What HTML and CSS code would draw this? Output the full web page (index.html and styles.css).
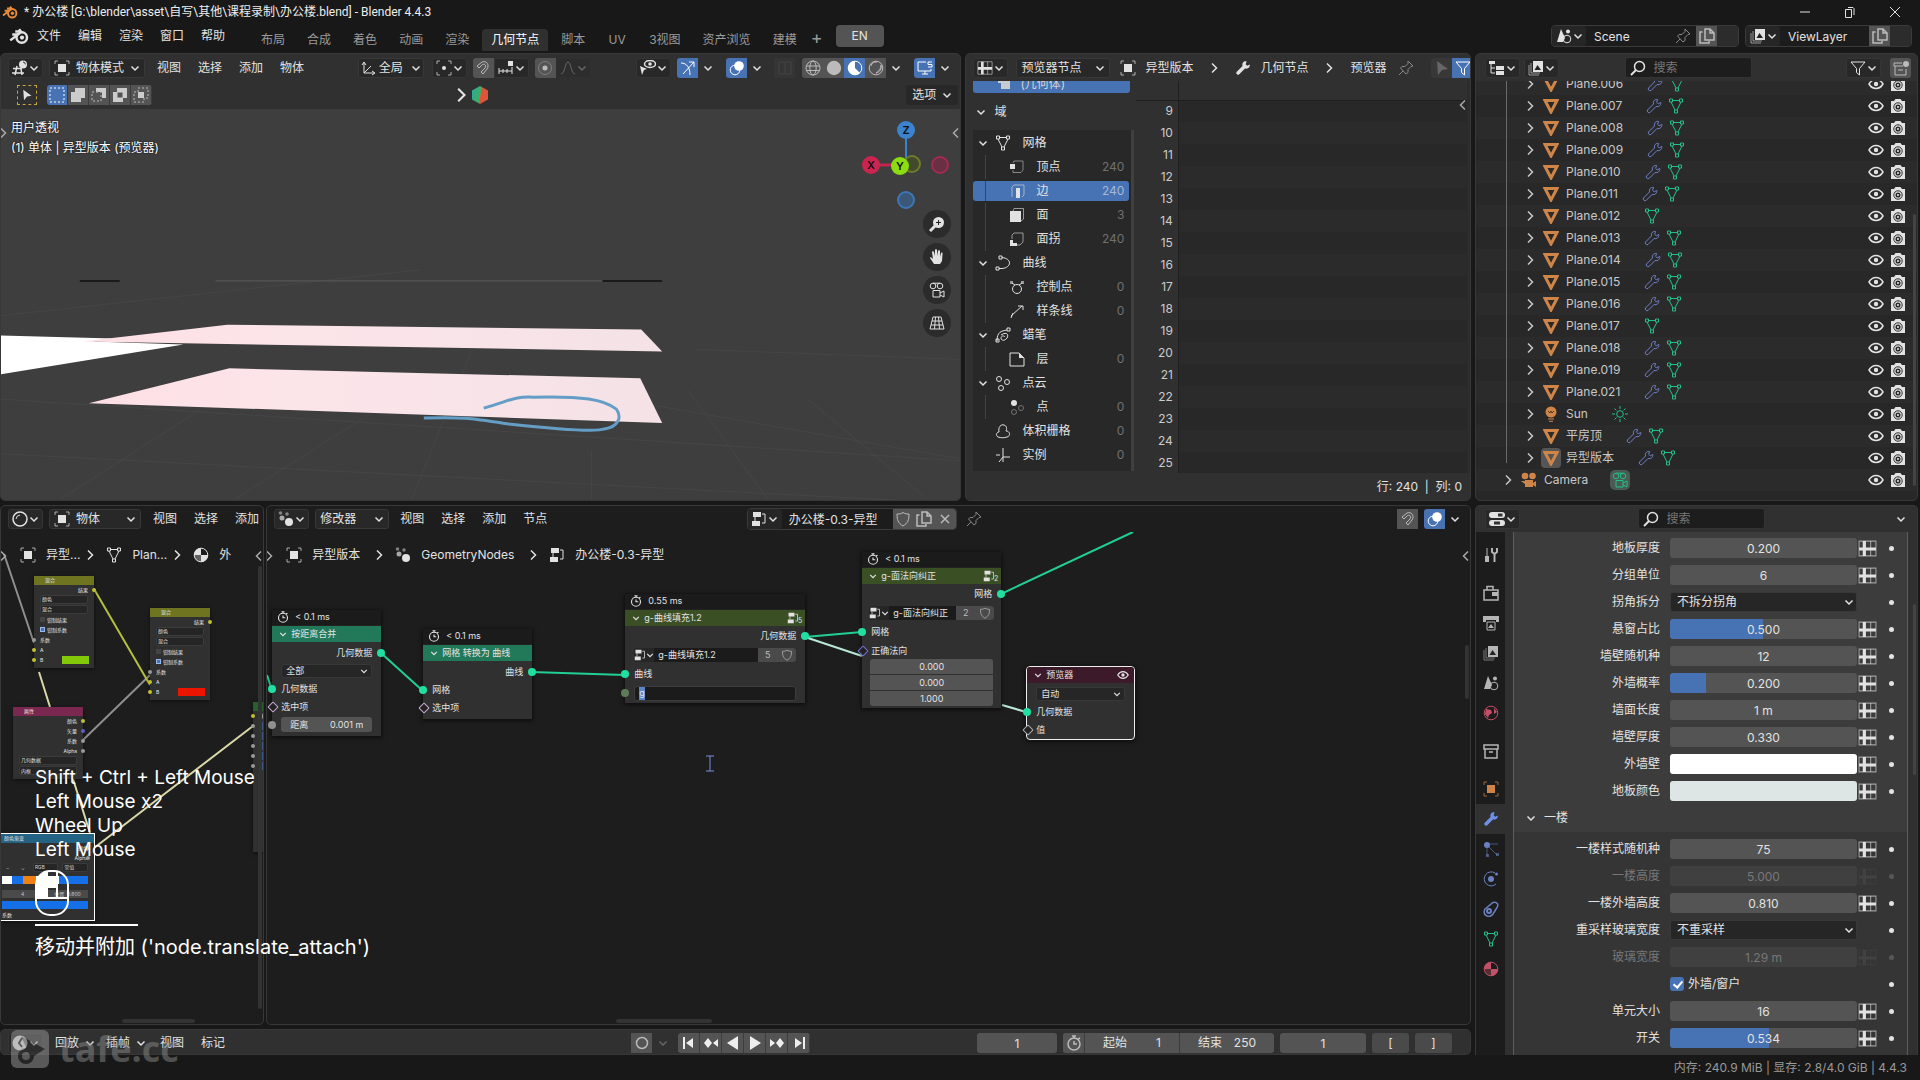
FILE: index.html
```html
<!DOCTYPE html>
<html lang="zh-CN">
<head>
<meta charset="utf-8">
<title>办公楼.blend - Blender 4.4.3</title>
<link rel="stylesheet" href="styles.css">
</head>
<body>
<svg class="defs" aria-hidden="true">
  <symbol id="chev" viewBox="0 0 10 10"><path d="M1.500 3.500L5 7l3.500-3.500" class="ln w15"/></symbol>
  <symbol id="right" viewBox="0 0 10 10"><path d="M3 .5L7.500 5 3 9.500" class="ln w15"/></symbol>
  <symbol id="left" viewBox="0 0 10 10"><path d="M7 .5L2.500 5 7 9.500" class="ln w15"/></symbol>
  <symbol id="blender" viewBox="0 0 16 16"><path d="M1 11.500L7.200 6.800H2.600M5 4.400h4.500L8 2.600" class="ln w2"/><circle cx="10.200" cy="9.200" r="4.200" class="ln w2"/><circle cx="10.400" cy="9.200" r="1.700" fill="currentColor"/></symbol>
  <symbol id="view3d" viewBox="0 0 16 16"><path d="M1 8.500h9M0 13h12M5 6L3 15M9 9l1 6" class="ln w15"/><circle cx="11" cy="4.500" r="4" fill="currentColor"/><path d="M11 2a2.500 2.500 0 0 1 2.400 2.400" stroke="#333" fill="none"/></symbol>
  <symbol id="object" viewBox="0 0 16 16"><rect x="4" y="4" width="8" height="8" fill="currentColor"/><path d="M1 4V1h3M12 1h3v3M15 12v3h-3M4 15H1v-3" class="ln" opacity=".7"/></symbol>
  <symbol id="orient" viewBox="0 0 16 16"><path d="M3 3v10h10M3 13l7-7M1 5l2-3 2 3M11 11l3 2-3 2" class="ln"/></symbol>
  <symbol id="pivot" viewBox="0 0 16 16"><circle cx="8" cy="8" r="2" fill="currentColor"/><path d="M1 4V1h3M12 1h3v3M15 12v3h-3M4 15H1v-3" class="ln" opacity=".7"/></symbol>
  <symbol id="magnet" viewBox="0 0 16 16"><path d="M2 6l5-4c4-2 8 3 5 7l-4 5-2-2 4-4c2-3-1-5-3-3L4 8z" class="ln"/></symbol>
  <symbol id="snap" viewBox="0 0 16 16"><path d="M1 8v6M5 9v4M9 9v4M14 7v7M1 11h13" class="ln"/><rect x="10" y="1" width="5" height="5" fill="currentColor"/></symbol>
  <symbol id="prop" viewBox="0 0 16 16"><circle cx="8" cy="8" r="6.500" class="ln" opacity=".4"/><circle cx="8" cy="8" r="2.500" fill="currentColor"/></symbol>
  <symbol id="falloff" viewBox="0 0 16 16"><path d="M1 14c4 0 4-12 7-12s3 12 7 12" class="ln"/></symbol>
  <symbol id="eyecur" viewBox="0 0 16 16"><ellipse cx="10" cy="4" rx="5.500" ry="3.500" class="ln w15"/><circle cx="10" cy="4" r="1.800" fill="currentColor"/><path d="M0 6l7 3-3 1-2 5z" fill="currentColor"/></symbol>
  <symbol id="gizmo" viewBox="0 0 16 16"><path d="M1 3c6 0 9 5 9 12M3 14L14 2M9 2h5v5" class="ln"/></symbol>
  <symbol id="overlay" viewBox="0 0 16 16"><circle cx="6" cy="10" r="4.800" class="ln"/><circle cx="10" cy="6" r="4.800" fill="currentColor"/></symbol>
  <symbol id="xray" viewBox="0 0 16 16"><path d="M2 2h12v12H2zM8 2v12" class="ln"/></symbol>
  <symbol id="wire" viewBox="0 0 16 16"><circle cx="8" cy="8" r="7" class="ln"/><ellipse cx="8" cy="8" rx="3.200" ry="7" class="ln"/><path d="M1.500 6h13M1.500 10.500h13" class="ln"/></symbol>
  <symbol id="solid" viewBox="0 0 16 16"><circle cx="8" cy="8" r="7.200" fill="currentColor"/></symbol>
  <symbol id="matprev" viewBox="0 0 16 16"><circle cx="8" cy="8" r="6.800" class="ln"/><path d="M8 1v7l5 5a7 7 0 1 1-5-12z" fill="currentColor"/></symbol>
  <symbol id="rendered" viewBox="0 0 16 16"><circle cx="8" cy="8" r="6.800" class="ln"/><path d="M3 6a5.500 5.500 0 0 1 6-4M13 5c1 4-1 7-5 8 3-2 5-4 5-8z" class="ln"/></symbol>
  <symbol id="screen" viewBox="0 0 16 16"><path d="M9 2H1v9h13v-2M5 14h6M8 11v3M15 2h-4v2.500h4V7h-4" class="ln"/></symbol>
  <symbol id="spreads" viewBox="0 0 18 16"><path d="M1 1h16v14H1z" class="ln" opacity=".6"/><path d="M6 1v14M1 8.500h16" class="ln w3"/><path d="M12 1v14" class="ln" opacity=".6"/></symbol>
  <symbol id="wrench" viewBox="0 0 16 16"><path d="M14.800 4.500l-2.600 1.300-1.600-1.500 1-2.800C9 .8 6.800 3 7.500 6L1.500 12c-1 1.400.9 3.500 2.500 2.500L10 8.500c3 .8 5.200-1.400 4.800-4z" fill="currentColor"/></symbol>
  <symbol id="wrencho" viewBox="0 0 16 16"><path d="M14.800 4.500l-2.600 1.300-1.600-1.500 1-2.800C9 .8 6.800 3 7.500 6L1.500 12c-1 1.400.9 3.500 2.500 2.500L10 8.500c3 .8 5.200-1.400 4.800-4z" class="ln"/></symbol>
  <symbol id="pin" viewBox="0 0 16 16"><path d="M10 1l5 5-2 .5-3 3v3L8 14 2.500 8 4 6.500h3l3-3zM5 11l-4 4" class="ln"/></symbol>
  <symbol id="cursor" viewBox="0 0 16 16"><path d="M3 1l11 8-6 1-4 5z" fill="currentColor"/></symbol>
  <symbol id="funnel" viewBox="0 0 16 16"><path d="M1 2h14L9.500 8.500V15L6.500 12.500v-4z" class="ln"/></symbol>
  <symbol id="hier" viewBox="0 0 16 16"><path d="M2 4v9h4M2 8h4" class="ln"/><path d="M0 1h6v3H0zM7 6h8v4H7zM7 11h8v4H7z" fill="currentColor"/></symbol>
  <symbol id="layers" viewBox="0 0 16 16"><path d="M1 5v10h10M3 3v10h9" class="ln" opacity=".6"/><path d="M5 1h10v11H5z" fill="currentColor"/><path d="M6.500 10l3-5 3.500 5z" fill="#222"/></symbol>
  <symbol id="search" viewBox="0 0 16 16"><circle cx="9.500" cy="6.500" r="5" class="ln w15"/><path d="M6 10l-5 5" class="ln w2"/></symbol>
  <symbol id="newcol" viewBox="0 0 16 16"><path d="M9 3H1v3h9M2 6v9h11V9M5 10h5" class="ln"/><circle cx="13" cy="4" r="3" fill="currentColor"/></symbol>
  <symbol id="copy" viewBox="0 0 16 16"><path d="M6 1h5l4 4v7H6zM11 1v4h4M3.500 4H1v11h9v-2" class="ln w15"/></symbol>
  <symbol id="scene" viewBox="0 0 16 16"><path d="M5 1l4 9-2 4H1z" fill="currentColor"/><circle cx="11" cy="11" r="3.800" class="ln"/><circle cx="12" cy="3.500" r="2" fill="currentColor"/></symbol>
  <symbol id="tri" viewBox="0 0 16 16"><path d="M2 2.500h12L8 14z" class="ln w3"/></symbol>
  <symbol id="mesh" viewBox="0 0 16 16"><path d="M4 2.500h8M3 4l4 8M13 4l-4 8" class="ln"/><path d="M1.500 1h3v3h-3zM11.500 1h3v3h-3zM6.500 12h3v3h-3z" class="ln"/></symbol>
  <symbol id="eye" viewBox="0 0 16 16"><path d="M1 8c3.500-6 10.500-6 14 0-3.500 6-10.500 6-14 0z" class="ln w15"/><circle cx="8" cy="8" r="2.200" fill="currentColor"/></symbol>
  <symbol id="cam" viewBox="0 0 16 16"><path d="M1 3h3l1.500-2h5L12 3h3v12H1z" fill="currentColor"/><circle cx="8" cy="9" r="4.200" fill="none" stroke="#2a2a2a"/><circle cx="8" cy="9" r="1.800" fill="none" stroke="#2a2a2a" stroke-width="1.500"/></symbol>
  <symbol id="bulb" viewBox="0 0 16 16"><circle cx="8" cy="6" r="5.500" fill="currentColor"/><path d="M5 5l2 2 1-2 1 2 2-2" stroke="#5a3a20" fill="none"/><path d="M5 13h6M6 15.300h4" class="ln"/></symbol>
  <symbol id="sun" viewBox="0 0 16 16"><circle cx="8" cy="8" r="3.300" class="ln"/><path d="M8 0v3M8 13v3M0 8h3M13 8h3M2.500 2.500l2 2M11.500 11.500l2 2M2.500 13.500l2-2M11.500 4.500l2-2" class="ln"/></symbol>
  <symbol id="movie" viewBox="0 0 16 16"><circle cx="4" cy="4" r="3.300" fill="currentColor"/><circle cx="11.500" cy="4" r="3.300" fill="currentColor"/><path d="M4 8h8v7H4zM12 11l3-2v6l-3-2zM0 9h4v3z" fill="currentColor"/></symbol>
  <symbol id="movieo" viewBox="0 0 16 16"><circle cx="4" cy="4" r="2.800" class="ln"/><circle cx="11" cy="4" r="2.800" class="ln"/><path d="M4 8.500h7V15H4zM11 11l4-2v6l-4-2M4 1.200h7" class="ln"/></symbol>
  <symbol id="vert" viewBox="0 0 16 16"><path d="M5 2h9v9l-2 2.500H4V11M4 4l1-2" class="ln" opacity=".5"/><path d="M1 5h5v5H1z" fill="currentColor"/></symbol>
  <symbol id="edge" viewBox="0 0 16 16"><path d="M3 14V4l2-2h10v10l-2 2" class="ln" opacity=".6"/><path d="M7 5h4v10H7z" fill="currentColor"/></symbol>
  <symbol id="face" viewBox="0 0 16 16"><path d="M4 4l1-2.500h9.500V12L12 14" class="ln" opacity=".6"/><path d="M1 4h11v11H1z" fill="currentColor"/></symbol>
  <symbol id="corner" viewBox="0 0 16 16"><path d="M3 8V4l2-2h9v9l-3 3H8" class="ln" opacity=".6"/><path d="M1 9h3v3h4v3H1z" fill="currentColor"/></symbol>
  <symbol id="curve" viewBox="0 0 16 16"><path d="M7 2.500c10 1 10 10 0 11H4M4 1h3v3H4zM1 12h3v3H1z" class="ln"/></symbol>
  <symbol id="ctrl" viewBox="0 0 16 16"><circle cx="8" cy="10" r="4.500" class="ln"/><path d="M3 4l3 2M13 4l-3 2" class="ln"/><path d="M1 2h3v3H1zM12 2h3v3h-3z" fill="currentColor" opacity=".6"/></symbol>
  <symbol id="spline" viewBox="0 0 16 16"><path d="M2 13L13 3M9 3h5v4M4 10l-2 5" class="ln"/></symbol>
  <symbol id="gp" viewBox="0 0 16 16"><path d="M2 14c0-9 4-10 10-11M6 8c6-4 8 0 6 3s-6 3-6 0c0-2 3-3 4-1M12 1h3v3h-3zM1 12h3v3H1z" class="ln"/></symbol>
  <symbol id="layer" viewBox="0 0 16 16"><path d="M1 2h9l5 5v8H1z" class="ln"/><path d="M10 2v5h5z" fill="currentColor"/></symbol>
  <symbol id="points" viewBox="0 0 16 16"><circle cx="4" cy="4" r="2.500" class="ln"/><circle cx="12" cy="7" r="2.500" class="ln"/><circle cx="6" cy="13" r="2.500" class="ln"/></symbol>
  <symbol id="point" viewBox="0 0 16 16"><circle cx="5" cy="4" r="3" fill="currentColor"/><g opacity=".4"><circle cx="12" cy="9" r="2.500" class="ln"/><circle cx="5" cy="13" r="2.500" class="ln"/></g></symbol>
  <symbol id="volume" viewBox="0 0 16 16"><path d="M3 14c-3-2-1-5 1-5-1-5 2-8 5-7s3 4 2 6c4 0 5 5 1 6-3 1-6 1-9 0z" class="ln"/></symbol>
  <symbol id="axes" viewBox="0 0 16 16"><path d="M8 1v9h7M8 10l-4 5M1 8h4M8 10v5" class="ln"/></symbol>
  <symbol id="geo" viewBox="0 0 16 16"><path d="M2 1h8v5h4v8H5V8H2z" fill="currentColor" opacity=".9"/></symbol>
  <symbol id="nodes" viewBox="0 0 16 16"><circle cx="11" cy="11" r="4" fill="currentColor"/><circle cx="4" cy="7" r="2.500" fill="currentColor" opacity=".7"/><circle cx="2.500" cy="2" r="1.800" fill="currentColor" opacity=".5"/><circle cx="9" cy="3" r="1.800" fill="currentColor" opacity=".5"/></symbol>
  <symbol id="nodetree" viewBox="0 0 16 16"><path d="M2 1h8v5H2zM1 10h8v5H1z" fill="currentColor"/><path d="M11 3h3v9h-3M4 6v4" class="ln"/></symbol>
  <symbol id="sphere" viewBox="0 0 16 16"><circle cx="8" cy="8" r="7" class="ln w15"/><path d="M4 8a4.500 4.500 0 0 1 4-4" class="ln"/></symbol>
  <symbol id="material" viewBox="0 0 16 16"><circle cx="8" cy="8" r="6.800" class="ln"/><path d="M8 8V1a7 7 0 0 0-7 7zM8 8h7a7 7 0 0 1-7 7z" fill="currentColor"/><path d="M8 8H1a7 7 0 0 0 7 7z" fill="currentColor" opacity=".35"/></symbol>
  <symbol id="shield" viewBox="0 0 16 16"><path d="M8 1.500c2 1.500 4 1.500 6 1.500 0 6-1 9-6 12-5-3-6-6-6-12 2 0 4 0 6-1.500z" class="ln"/></symbol>
  <symbol id="cross" viewBox="0 0 16 16"><path d="M4 4l8 8M12 4l-8 8" class="ln w15"/></symbol>
  <symbol id="watch" viewBox="0 0 16 16"><circle cx="8" cy="9" r="6" class="ln w15"/><path d="M8 6v3h3M8 3V1M6 1h4M12 4l2-1" class="ln w15"/></symbol>
  <symbol id="props" viewBox="0 0 16 16"><rect x="0" y="1" width="16" height="6" rx="3" fill="currentColor"/><rect x="0" y="9" width="16" height="6" rx="3" fill="currentColor"/><path d="M9 2.500h4.500v3H9zM5 10.500h6v3H5z" fill="#333"/></symbol>
  <symbol id="tool" viewBox="0 0 16 16"><path d="M4 1v8" class="ln"/><path d="M2 9h4v6H2z" fill="currentColor"/><path d="M9 1v4l2.500 2L14 5V1M11.500 7v8" class="ln w2"/></symbol>
  <symbol id="render" viewBox="0 0 16 16"><path d="M1 5h14v10H1zM4 5V1.500h6V5" class="ln w15"/><path d="M9 7h6v4H9z" fill="currentColor"/></symbol>
  <symbol id="output" viewBox="0 0 16 16"><path d="M0 1h16v6h-3V5H3v2H0z" fill="currentColor"/><path d="M4 7h8v8H4z" class="ln"/><path d="M5 13l3-4 3 4z" fill="currentColor"/></symbol>
  <symbol id="world" viewBox="0 0 16 16"><circle cx="8" cy="8" r="6.800" class="ln"/><path d="M3 4l5 1 1 3-3 2-1 3-3-4zM11 3l3 4-3 2z" fill="currentColor"/></symbol>
  <symbol id="box" viewBox="0 0 16 16"><path d="M1 2h14v4H1zM2 6v9h12V6M6 9h4" class="ln w15"/></symbol>
  <symbol id="parts" viewBox="0 0 16 16"><circle cx="4" cy="4" r="3" fill="currentColor"/><path d="M4 7v8M6 6l8 8M7 3h8" class="ln" opacity=".6"/><path d="M3 13h3v3H3zM13 12h3v3h-3z" fill="currentColor" opacity=".6"/></symbol>
  <symbol id="phys" viewBox="0 0 16 16"><circle cx="8" cy="8" r="3" fill="currentColor"/><path d="M13 13A7 7 0 1 1 12 2" class="ln"/><circle cx="13.500" cy="3" r="1.500" fill="currentColor"/></symbol>
  <symbol id="constr" viewBox="0 0 16 16"><path d="M2 8l8-6.500c4-1 6 2 4 5L10 13c-4 5-11 1-8-5z" class="ln w15"/><circle cx="6" cy="10" r="2" class="ln w2"/></symbol>
  <symbol id="clock" viewBox="0 0 16 16"><circle cx="8" cy="8" r="7.500" fill="currentColor"/><path d="M10 3L7 8l3 4" stroke="#222" stroke-width="2" fill="none"/></symbol>
  <symbol id="zoomin" viewBox="0 0 16 16"><circle cx="9.500" cy="6.500" r="5.500" fill="currentColor"/><path d="M6 10l-5 5" class="ln w3"/><path d="M9.500 4v5M7 6.500h5" stroke="#222"/></symbol>
  <symbol id="hand" viewBox="0 0 16 16"><path d="M5 15l-4-6c0-1 1-1 3 1L3 3c0-1 1.500-1 2 0l1 4V1c0-1 2-1 2 0v6l1-5c0-1 2-1 2 0v6l1-4c1-1 2 0 1.500 1L13 12l-2 3z" fill="currentColor"/></symbol>
  <symbol id="persp" viewBox="0 0 16 16"><path d="M4 2h8l3 12H1zM3 6h10M2 10h12M6.500 2L5.500 14M9.500 2l1 12" class="ln"/></symbol>
</svg>

<div class="app">
  <header class="titlebar">
    <svg class="i orange"><use href="#blender"/></svg>
    <h1>* 办公楼 [G:\blender\asset\自写\其他\课程录制\办公楼.blend] - Blender 4.4.3</h1>
    <span class="grow"></span>
    <button class="win" aria-label="最小化"><svg viewBox="0 0 12 12"><path d="M1 6h10" class="ln"/></svg></button>
    <button class="win" aria-label="还原"><svg viewBox="0 0 12 12"><path d="M1.500 3.500h6v8h-6zM4 1.500h5l1 1V9" class="ln"/></svg></button>
    <button class="win" aria-label="关闭"><svg viewBox="0 0 12 12"><path d="M1 1l10 10M11 1L1 11" class="ln"/></svg></button>
  </header>

  <nav class="menubar">
    <svg class="i big"><use href="#blender"/></svg>
    <div class="menus"><button>文件</button><button>编辑</button><button>渲染</button><button>窗口</button><button>帮助</button></div>
    <div class="tabs"><button>布局</button><button>合成</button><button>着色</button><button>动画</button><button>渲染</button><button class="on">几何节点</button><button>脚本</button><button>UV</button><button>3视图</button><button>资产浏览</button><button>建模</button></div>
    <button class="plus">+</button>
    <button class="lang">EN</button>
    <span class="grow"></span>
    <div class="idbar scene"><button class="ed"><svg class="i"><use href="#scene"/></svg><svg class="c"><use href="#chev"/></svg></button><input aria-label="场景" value="Scene"><svg class="i dim"><use href="#pin"/></svg><button class="sq on"><svg class="i"><use href="#copy"/></svg></button><button class="sq" aria-label="移除场景"></button></div>
    <div class="idbar vlayer"><button class="ed"><svg class="i"><use href="#layers"/></svg><svg class="c"><use href="#chev"/></svg></button><input aria-label="视图层" value="ViewLayer"><button class="sq on"><svg class="i"><use href="#copy"/></svg></button><button class="sq" aria-label="移除视图层"></button></div>
  </nav>

  <main class="work">
    <div class="leftcol">
      <div class="toprow">
        <section class="area view3d">
          <div class="head">
            <button class="ed"><svg class="i"><use href="#view3d"/></svg><svg class="c"><use href="#chev"/></svg></button>
            <div class="sel mode"><svg class="i"><use href="#object"/></svg><select aria-label="模式"><option>物体模式</option></select><svg class="c"><use href="#chev"/></svg></div>
            <div class="menus"><button>视图</button><button>选择</button><button>添加</button><button>物体</button></div>
            <span class="grow"></span>
            <div class="sel orient"><svg class="i"><use href="#orient"/></svg><select aria-label="坐标系"><option>全局</option></select><svg class="c"><use href="#chev"/></svg></div>
            <button class="ed"><svg class="i"><use href="#pivot"/></svg><svg class="c"><use href="#chev"/></svg></button>
            <div class="grp"><button class="sq on"><svg class="i"><use href="#magnet"/></svg></button><button class="ed"><svg class="i"><use href="#snap"/></svg><svg class="c"><use href="#chev"/></svg></button></div>
            <div class="grp"><button class="sq on"><svg class="i"><use href="#prop"/></svg></button><button class="ed faint"><svg class="i"><use href="#falloff"/></svg><svg class="c"><use href="#chev"/></svg></button></div>
            <span class="grow"></span>
            <button class="ed"><svg class="i"><use href="#eyecur"/></svg><svg class="c"><use href="#chev"/></svg></button>
            <div class="grp"><button class="sq blue"><svg class="i"><use href="#gizmo"/></svg></button><button class="cb"><svg class="c"><use href="#chev"/></svg></button></div>
            <div class="grp ov"><button class="sq blue"><svg class="i"><use href="#overlay"/></svg></button><button class="cb"><svg class="c"><use href="#chev"/></svg></button></div>
            <button class="sq ghost"><svg class="i"><use href="#xray"/></svg></button>
            <div class="grp shade"><button class="sq on"><svg class="i"><use href="#wire"/></svg></button><button class="sq on"><svg class="i"><use href="#solid"/></svg></button><button class="sq blue"><svg class="i"><use href="#matprev"/></svg></button><button class="sq on"><svg class="i"><use href="#rendered"/></svg></button><button class="cb"><svg class="c"><use href="#chev"/></svg></button></div>
            <div class="grp"><button class="sq blue"><svg class="i"><use href="#screen"/></svg></button><button class="cb"><svg class="c"><use href="#chev"/></svg></button></div>
          </div>
          <div class="head tools">
            <button class="tsel"><svg class="i sm"><use href="#cursor"/></svg></button>
            <div class="grp modes">
              <button class="sq blue"><svg class="i" viewBox="0 0 16 16"><path d="M1 1h14v14H1z" class="ln dash"/></svg></button>
              <button class="sq on"><svg class="i" viewBox="0 0 16 16"><path d="M5 1h10v10h-4v4H1V5h4z" fill="#ccc"/></svg></button>
              <button class="sq on"><svg class="i" viewBox="0 0 16 16"><path d="M5 1h10v10h-4V5H5z" fill="#ccc"/><path d="M1 5h9v9H1z" class="ln dash"/></svg></button>
              <button class="sq on"><svg class="i" viewBox="0 0 16 16"><path fill-rule="evenodd" d="M5 1h10v10h-4v4H1V5h4zM5.500 5.500v5h5v-5z" fill="#ccc"/></svg></button>
              <button class="sq on"><svg class="i" viewBox="0 0 16 16"><path d="M5 1h10v10h-4v4H1V5h4z" class="ln dash"/><path d="M5 5h6v6H5z" fill="#ccc"/></svg></button>
            </div>
            <div class="asset"><svg class="c"><use href="#right"/></svg><span class="hex"></span></div>
            <span class="grow"></span>
            <button class="opt">选项<svg class="c"><use href="#chev"/></svg></button>
          </div>
          <div class="scene3d">
            <svg class="fill" viewBox="1 108 962 393" preserveAspectRatio="none">
              <g stroke="#4a4a4a" fill="none">
                <path d="M1 316l420-46M1 455l962 50M1 400l962 62M60 501l140-90M235 501l150-95M413 501l60-150M593 501v-50M770 501l-80-110M930 501L810 400M620 400l343 60M700 350l263 10" opacity=".6"/>
              </g>
              <path d="M80 281h40M604 281h60" stroke="#1a1a1a" stroke-width="2"/><path d="M216 281h388" stroke="#5c5c5c"/>
              <path d="M1 336l112 3-20 3 91 3L1 375z" fill="#fff"/>
              <path d="M82 342l146-17 415 5 21 22z" fill="url(#pink)"/>
              <path d="M89 404l141-35 412 10 22 45z" fill="url(#pink)"/>
              <path d="M485 409c28-8 30-12 50-11 50-1 70 2 83 12 6 8 2 18-12 20-8 3-50 0-96-5-40-6-45-7-85-6" fill="none" stroke="#649ec6" stroke-width="3"/>
              <defs><linearGradient id="pink"><stop offset="0" stop-color="#fddfe4"/><stop offset=".35" stop-color="#fce5e9"/><stop offset="1" stop-color="#f4e2e7"/></linearGradient></defs>
            </svg>
            <div class="info"><p>用户透视</p><p>(1) 单体 | 异型版本 (预览器)</p></div>
            <svg class="axis" viewBox="860 117 96 96">
              <path d="M908 129v36" stroke-width="2" stroke="#3b83cf"/><path d="M880 164h20" stroke-width="3" stroke="#c2254e"/>
              <circle cx="914" cy="163" r="8" fill="#444a2c" stroke="#6b7d2a" stroke-width="2"/>
              <circle cx="942" cy="164" r="8" fill="#693044" stroke="#a52a50" stroke-width="2"/>
              <circle cx="908" cy="199" r="8" fill="#3c5878" stroke="#3b77b8" stroke-width="2"/>
              <circle cx="908" cy="129" r="9" fill="#3b83cf"/><circle cx="873" cy="164" r="9" fill="#cb2450"/><circle cx="902" cy="165" r="9" fill="#8bdc10"/>
              <text x="908" y="133">Z</text><text x="873" y="168">X</text><text x="902" y="169">Y</text>
            </svg>
            <div class="navs"><button aria-label="缩放"><svg class="i"><use href="#zoomin"/></svg></button><button aria-label="平移"><svg class="i"><use href="#hand"/></svg></button><button aria-label="相机"><svg class="i"><use href="#movieo"/></svg></button><button aria-label="透视"><svg class="i"><use href="#persp"/></svg></button></div>
            <svg class="c edgeR"><use href="#left"/></svg><svg class="c edgeL"><use href="#right"/></svg>
          </div>
        </section>

        <section class="area sheet">
          <div class="head">
            <button class="ed"><svg class="i"><use href="#spreads"/></svg><svg class="c"><use href="#chev"/></svg></button>
            <div class="sel"><select aria-label="数据源"><option>预览器节点</option></select><svg class="c"><use href="#chev"/></svg></div>
            <div class="crumb"><svg class="i"><use href="#object"/></svg><span>异型版本</span><svg class="c"><use href="#right"/></svg><svg class="i"><use href="#wrench"/></svg><span>几何节点</span><svg class="c"><use href="#right"/></svg><span>预览器</span></div>
            <svg class="i dim"><use href="#pin"/></svg>
            <div class="grp"><button class="sq ghost2"><svg class="i"><use href="#cursor"/></svg></button><button class="sq blue"><svg class="i"><use href="#funnel"/></svg></button></div>
          </div>
          <div class="sheetbody">
            <aside class="dtree">
              <div class="geosel"><svg class="i"><use href="#geo"/></svg><span>(几何体)</span></div>
              <h2><svg class="c"><use href="#chev"/></svg>域</h2>
              <ul>
                <li class="p"><svg class="c"><use href="#chev"/></svg><svg class="i"><use href="#mesh"/></svg><span>网格</span></li>
                <li><svg class="i"><use href="#vert"/></svg><span>顶点</span><b>240</b></li>
                <li class="on"><svg class="i"><use href="#edge"/></svg><span>边</span><b>240</b></li>
                <li><svg class="i"><use href="#face"/></svg><span>面</span><b>3</b></li>
                <li><svg class="i"><use href="#corner"/></svg><span>面拐</span><b>240</b></li>
                <li class="p"><svg class="c"><use href="#chev"/></svg><svg class="i"><use href="#curve"/></svg><span>曲线</span></li>
                <li><svg class="i"><use href="#ctrl"/></svg><span>控制点</span><b>0</b></li>
                <li><svg class="i"><use href="#spline"/></svg><span>样条线</span><b>0</b></li>
                <li class="p"><svg class="c"><use href="#chev"/></svg><svg class="i"><use href="#gp"/></svg><span>蜡笔</span></li>
                <li><svg class="i"><use href="#layer"/></svg><span>层</span><b>0</b></li>
                <li class="p"><svg class="c"><use href="#chev"/></svg><svg class="i"><use href="#points"/></svg><span>点云</span></li>
                <li><svg class="i"><use href="#point"/></svg><span>点</span><b>0</b></li>
                <li class="p leaf"><svg class="i"><use href="#volume"/></svg><span>体积栅格</span><b>0</b></li>
                <li class="p leaf"><svg class="i"><use href="#axes"/></svg><span>实例</span><b>0</b></li>
              </ul>
            </aside>
            <div class="grid">
              <table>
                <thead><tr><th aria-label="索引"></th><td></td></tr></thead>
                <tbody>
                  <tr><th>9</th><td></td></tr><tr><th>10</th><td></td></tr><tr><th>11</th><td></td></tr><tr><th>12</th><td></td></tr><tr><th>13</th><td></td></tr><tr><th>14</th><td></td></tr><tr><th>15</th><td></td></tr><tr><th>16</th><td></td></tr><tr><th>17</th><td></td></tr><tr><th>18</th><td></td></tr><tr><th>19</th><td></td></tr><tr><th>20</th><td></td></tr><tr><th>21</th><td></td></tr><tr><th>22</th><td></td></tr><tr><th>23</th><td></td></tr><tr><th>24</th><td></td></tr><tr><th>25</th><td></td></tr>
                </tbody>
              </table>
              <svg class="c edgeR"><use href="#left"/></svg>
            </div>
          </div>
          <footer class="stat">行: 240 &nbsp;|&nbsp; 列: 0</footer>
        </section>
      </div>

      <div class="midrow">
        <section class="area shader">
          <div class="head">
            <button class="ed"><svg class="i"><use href="#sphere"/></svg><svg class="c"><use href="#chev"/></svg></button>
            <div class="sel obj"><svg class="i"><use href="#object"/></svg><select aria-label="着色类型"><option>物体</option></select><svg class="c"><use href="#chev"/></svg></div>
            <div class="menus"><button>视图</button><button>选择</button><button>添加</button></div>
          </div>
          <div class="canvas">
            <svg class="wires" viewBox="0 0 263 490">
              <path d="M3 22l30 89M82 208l67-65" stroke="#8f8f8f"/><path d="M93 57l56 96" stroke="#b5c03c"/><path d="M38 140l11 35M72 247l17 54M93 316l159-122" stroke="#d8d8a8"/>
            </svg>
            <div class="crumb"><svg class="i"><use href="#object"/></svg><span>异型...</span><svg class="c"><use href="#right"/></svg><svg class="i"><use href="#mesh"/></svg><span>Plan...</span><svg class="c"><use href="#right"/></svg><svg class="i"><use href="#material"/></svg><span>外</span></div>
            <svg class="c edgeR"><use href="#left"/></svg><svg class="c edgeL"><use href="#right"/></svg>
            <div class="mini mix" style="left:33px;top:44px"><h3>混合</h3><p class="out y">结果</p><p><select aria-label="数据类型"><option>颜色</option></select></p><p><select aria-label="混合模式"><option>混合</option></select></p><p><label><input type="checkbox">钳制结果</label></p><p><label><input type="checkbox" checked>钳制系数</label></p><p class="in g">系数</p><p class="in y">A</p><p class="in y">B<i class="green"></i></p></div>
            <div class="mini mix" style="left:149px;top:76px"><h3>混合</h3><p class="out y">结果</p><p><select aria-label="数据类型"><option>颜色</option></select></p><p><select aria-label="混合模式"><option>混合</option></select></p><p><label><input type="checkbox">钳制结果</label></p><p><label><input type="checkbox" checked>钳制系数</label></p><p class="in g">系数</p><p class="in y">A</p><p class="in y">B<i class="red"></i></p></div>
            <div class="mini attr" style="left:12px;top:175px"><h3>属性</h3><p class="out y">颜色</p><p class="out v">矢量</p><p class="out g">系数</p><p class="out g">Alpha</p><p><select aria-label="属性类型"><option>几何数据</option></select></p><p><input aria-label="名称" value="内框"></p></div>
            <div class="mini bsdf" style="left:252px;top:170px"><h3></h3><p class="in y">基</p><p class="in g"><i></i></p><p class="in g"><i></i></p><p class="in g"><i></i></p><p class="in g"><i></i></p><p class="in g"><i></i></p></div>
            <div class="mini ramp" style="left:-6px;top:301px"><h3>颜色渐变</h3><p class="out y">颜色</p><p class="out g">Alpha</p><div class="two"><span>−</span><span>⌄</span><select aria-label="颜色模式"><option>RGB</option></select><select aria-label="插值"><option>常值</option></select></div><div class="bar"></div><div class="two"><input aria-label="索引" value="4"><input aria-label="位置" value="位置  0.600"></div><div class="bar plain"></div><p>系数</p></div>
          </div>
        </section>

        <section class="area geon">
          <div class="head">
            <button class="ed"><svg class="i"><use href="#nodes"/></svg><svg class="c"><use href="#chev"/></svg></button>
            <div class="sel modi"><select aria-label="节点树类型"><option>修改器</option></select><svg class="c"><use href="#chev"/></svg></div>
            <div class="menus"><button>视图</button><button>选择</button><button>添加</button><button>节点</button></div>
            <span class="grow g4"></span>
            <div class="idbar ngroup"><button class="ed"><svg class="i"><use href="#nodetree"/></svg><svg class="c"><use href="#chev"/></svg></button><input aria-label="节点组名称" value="办公楼-0.3-异型"><button class="sq on"><svg class="i"><use href="#shield"/></svg></button><button class="sq on"><svg class="i"><use href="#copy"/></svg></button><button class="sq on"><svg class="i"><use href="#cross"/></svg></button></div>
            <svg class="i dim tpin"><use href="#pin"/></svg>
            <span class="grow g9"></span>
            <button class="sq on"><svg class="i"><use href="#magnet"/></svg></button>
            <div class="grp"><button class="sq blue"><svg class="i"><use href="#overlay"/></svg></button><button class="cb"><svg class="c"><use href="#chev"/></svg></button></div>
          </div>
          <div class="canvas">
            <svg class="wires" viewBox="0 0 1205 490">
              <g stroke="#21cf96"><path d="M0 143l5 15M114 121l42 38M264 140l94 3M538 105l57-5M734 62L866 0"/></g>
              <path d="M538 105l57 19M735 173l24 7" stroke="#b9e8d6"/>
              <path d="M439 224h8M439 239h8M443 224v15" stroke="#7b8fe0" stroke-width="1"/>
            </svg>
            <div class="crumb"><svg class="i"><use href="#object"/></svg><span>异型版本</span><svg class="c"><use href="#right"/></svg><svg class="i"><use href="#nodes"/></svg><span>GeometryNodes</span><svg class="c"><use href="#right"/></svg><svg class="i"><use href="#nodetree"/></svg><span>办公楼-0.3-异型</span></div>
            <svg class="c edgeR"><use href="#left"/></svg><svg class="c edgeL"><use href="#right"/></svg>

            <article class="node" style="left:5px;top:78px"><div class="time"><svg class="i"><use href="#watch"/></svg>&lt; 0.1 ms</div><h3><svg class="c"><use href="#chev"/></svg>按距离合并</h3>
              <div class="row out geo">几何数据</div><div class="row"><div class="drop"><select aria-label="合并模式"><option>全部</option></select><svg class="c"><use href="#chev"/></svg></div></div><div class="row in geo">几何数据</div><div class="row in bool">选中项</div><div class="row in flt"><label class="num"><span>距离</span><input value="0.001 m"></label></div></article>
            <article class="node" style="left:156px;top:97px"><div class="time"><svg class="i"><use href="#watch"/></svg>&lt; 0.1 ms</div><h3><svg class="c"><use href="#chev"/></svg>网格 转换为 曲线</h3>
              <div class="row out geo">曲线</div><div class="row in geo">网格</div><div class="row in bool">选中项</div></article>
            <article class="node tall n3" style="left:358px;top:62px"><div class="time"><svg class="i"><use href="#watch"/></svg>0.55 ms</div><h3><svg class="c"><use href="#chev"/></svg>g-曲线填充1.2<svg class="i grpi"><use href="#nodetree"/></svg><sub>5</sub></h3>
              <div class="row out geo">几何数据</div><div class="row"><div class="gsel"><svg class="i"><use href="#nodetree"/></svg><svg class="c"><use href="#chev"/></svg><input aria-label="节点组" value="g-曲线填充1.2"><button>5</button><button><svg class="i"><use href="#shield"/></svg></button></div></div><div class="row in geo">曲线</div><div class="row in str"><div class="edit"><input aria-label="组值" value="g"></div></div></article>
            <article class="node tall n4" style="left:595px;top:20px"><div class="time"><svg class="i"><use href="#watch"/></svg>&lt; 0.1 ms</div><h3><svg class="c"><use href="#chev"/></svg>g-面法向纠正<svg class="i grpi"><use href="#nodetree"/></svg><sub>2</sub></h3>
              <div class="row out geo">网格</div><div class="row"><div class="gsel"><svg class="i"><use href="#nodetree"/></svg><svg class="c"><use href="#chev"/></svg><input aria-label="节点组" value="g-面法向纠正"><button>2</button><button><svg class="i"><use href="#shield"/></svg></button></div></div><div class="row in geo">网格</div><div class="row in vec">正确法向</div><div class="xyz"><input aria-label="X" value="0.000"><input aria-label="Y" value="0.000"><input aria-label="Z" value="1.000"></div></article>
            <article class="node n5" style="left:759px;top:134px"><h3><svg class="c"><use href="#chev"/></svg>预览器<svg class="i grpi"><use href="#eye"/></svg></h3>
              <div class="row"><div class="drop"><select aria-label="域"><option>自动</option></select><svg class="c"><use href="#chev"/></svg></div></div><div class="row in geo">几何数据</div><div class="row in val">值</div></article>
          </div>
        </section>
      </div>

      <section class="area timeline">
        <div class="head">
          <button class="ed"><svg class="i"><use href="#clock"/></svg><svg class="c"><use href="#chev"/></svg></button>
          <div class="menus tm"><button>回放<svg class="c"><use href="#chev"/></svg></button><button>插帧<svg class="c"><use href="#chev"/></svg></button><button>视图</button><button>标记</button></div>
          <span class="grow g5"></span>
          <button class="sq on" aria-label="自动插帧"><svg class="i" viewBox="0 0 16 16"><circle cx="8" cy="8" r="5.500" class="ln w15"/></svg></button><svg class="c faint"><use href="#chev"/></svg>
          <div class="grp play">
            <button class="sq on" aria-label="首帧"><svg class="i" viewBox="0 0 16 16"><path d="M2 2h2v12H2zM12 3v10L5 8z" fill="#eee"/></svg></button>
            <button class="sq on" aria-label="上一关键帧"><svg class="i" viewBox="0 0 16 16"><path d="M5 3l4 5-4 5-4-5zM15 4v8l-5-4z" fill="#eee"/></svg></button>
            <button class="sq on" aria-label="倒放"><svg class="i" viewBox="0 0 16 16"><path d="M13 1v14L2 8z" fill="#eee"/></svg></button>
            <button class="sq on" aria-label="播放"><svg class="i" viewBox="0 0 16 16"><path d="M3 1v14l11-7z" fill="#eee"/></svg></button>
            <button class="sq on" aria-label="下一关键帧"><svg class="i" viewBox="0 0 16 16"><path d="M11 3l4 5-4 5-4-5zM1 4v8l5-4z" fill="#eee"/></svg></button>
            <button class="sq on" aria-label="末帧"><svg class="i" viewBox="0 0 16 16"><path d="M12 2h2v12h-2zM4 3v10l7-5z" fill="#eee"/></svg></button>
          </div>
          <span class="grow g2"></span>
          <input class="tf w80" aria-label="当前帧" value="1">
          <div class="grp range"><button class="sq on" aria-label="预览范围"><svg class="i"><use href="#watch"/></svg></button><label>起始<input value="1"></label><label>结束<input value="250"></label></div>
          <input class="tf w86" aria-label="帧步长" value="1"><button class="brk">[</button><button class="brk">]</button>
        </div>
      </section>
    </div>

    <div class="rightcol">
      <section class="area outliner">
        <div class="head">
          <button class="ed"><svg class="i"><use href="#hier"/></svg><svg class="c"><use href="#chev"/></svg></button>
          <button class="ed"><svg class="i"><use href="#layers"/></svg><svg class="c"><use href="#chev"/></svg></button>
          <span class="grow g2"></span>
          <label class="find"><svg class="i"><use href="#search"/></svg><input type="search" aria-label="搜索大纲" placeholder="搜索"></label>
          <span class="grow g3"></span>
          <button class="ed"><svg class="i"><use href="#funnel"/></svg><svg class="c"><use href="#chev"/></svg></button>
          <button class="sq on newc" aria-label="新建集合"><svg class="i"><use href="#newcol"/></svg></button>
        </div>
        <ul class="olist"></ul>
      </section>

      <section class="area propsed">
        <div class="head">
          <button class="ed"><svg class="i"><use href="#props"/></svg><svg class="c"><use href="#chev"/></svg></button>
          <span class="grow"></span>
          <label class="find"><svg class="i"><use href="#search"/></svg><input type="search" aria-label="搜索属性" placeholder="搜索"></label>
          <span class="grow"></span>
          <button class="cb" aria-label="选项"><svg class="c"><use href="#chev"/></svg></button>
        </div>
        <div class="pbody">
          <nav class="ptabs">
            <button class="gap"><svg class="i"><use href="#tool"/></svg></button><button><svg class="i"><use href="#render"/></svg></button><button><svg class="i"><use href="#output"/></svg></button><button><svg class="i"><use href="#layers"/></svg></button><button><svg class="i"><use href="#scene"/></svg></button><button class="gap pinkc"><svg class="i"><use href="#world"/></svg></button><button class="gap"><svg class="i"><use href="#box"/></svg></button><button class="orangec"><svg class="i"><use href="#object"/></svg></button><button class="on bluec"><svg class="i"><use href="#wrench"/></svg></button><button class="bluec2"><svg class="i"><use href="#parts"/></svg></button><button class="bluec2"><svg class="i"><use href="#phys"/></svg></button><button class="bluec2"><svg class="i"><use href="#constr"/></svg></button><button class="greenc"><svg class="i"><use href="#mesh"/></svg></button><button class="pinkc"><svg class="i"><use href="#material"/></svg></button>
          </nav>
          <div class="panel">
            <div class="rows a"></div>
            <h2><svg class="c"><use href="#chev"/></svg>一楼</h2>
            <div class="rows b"></div>
          </div>
        </div>
      </section>
    </div>
  </main>

  <footer class="status">内存: 240.9 MiB | 显存: 2.8/4.0 GiB | 4.4.3</footer>

  <div class="keys">
    <p>Shift + Ctrl + Left Mouse</p><p>Left Mouse x2</p><p>Wheel Up</p><p>Left Mouse</p>
    <svg viewBox="0 0 34 46"><path d="M12 1h3a14 14 0 0 0-14 14v13h11z" fill="#fff"/><rect x="1" y="1" width="32" height="44" rx="14" fill="none" stroke="#fff" stroke-width="2"/><path d="M12 1v27M22 1v27M1 28h32M12 8h10M12 17h10" stroke="#fff" stroke-width="2"/><path d="M12 9h10v8H12z" fill="#fff"/></svg>
    <hr>
    <p class="op">移动并附加 ('node.translate_attach')</p>
  </div>
  <div class="mark"><svg viewBox="0 0 38 38"><rect width="38" height="38" rx="6" fill="#999"/><path d="M10 6l24 13-14 9z" fill="#333"/><circle cx="15" cy="26" r="6" fill="none" stroke="#333" stroke-width="4"/></svg><span>tafe.cc</span></div>
</div>
<script src="app.js"></script>
</body>
</html>
```
FILE: app.js
```js
const icon = (name, cls = "i") => `<svg class="${cls}"><use href="#${name}"/></svg>`;

const mesh = (name, mod = true, active = false) => ({ name, active, icon: "tri", data: mod ? ["wrencho", "mesh"] : ["mesh"] });
const objects = [
  mesh("Plane.006"), mesh("Plane.007"), mesh("Plane.008"), mesh("Plane.009"), mesh("Plane.010"),
  mesh("Plane.011"), mesh("Plane.012", false), mesh("Plane.013"), mesh("Plane.014"), mesh("Plane.015"),
  mesh("Plane.016"), mesh("Plane.017", false), mesh("Plane.018"), mesh("Plane.019"), mesh("Plane.021"),
  { name: "Sun", icon: "bulb", data: ["sun"] },
  mesh("平房顶"), mesh("异型版本", true, true),
  { name: "Camera", icon: "movie", data: ["movieo"], top: true }
];
document.querySelector(".olist").innerHTML = objects.map(o => `
  <li class="${o.top ? "top" : ""}">${icon("right", "c")}<span class="ob${o.active ? " act" : ""}">${icon(o.icon)}</span>
  <span class="nm">${o.name}</span>${o.data.map(d => icon(d, "i d-" + d)).join("")}
  <span class="grow"></span>${icon("eye")}${icon("cam")}</li>`).join("");

const upper = [
  ["地板厚度", "0.200"], ["分组单位", "6"], ["拐角拆分", "不拆分拐角", { menu: true }],
  ["悬窗占比", "0.500", { fill: 50 }], ["墙壁随机种", "12"], ["外墙概率", "0.200", { fill: 19 }],
  ["墙面长度", "1 m"], ["墙壁厚度", "0.330"], ["外墙壁", "#ffffff", { color: true }], ["地板颜色", "#dde6e4", { color: true }]
];
const ground = [
  ["一楼样式随机种", "75"], ["一楼高度", "5.000", { off: true }], ["一楼外墙高度", "0.810"],
  ["重采样玻璃宽度", "不重采样", { menu: true }], ["玻璃宽度", "1.29 m", { off: true }],
  ["外墙/窗户", "", { check: true }], ["单元大小", "16"], ["开关", "0.534", { fill: 53 }]
];
function row([label, value, opt = {}], key) {
  if (opt.check) return `<div class="prow"><span></span><label class="chk"><input type="checkbox" checked>${label}</label><i class="dot"></i></div>`;
  let field = `<input id="${key}" value="${value}"${opt.fill ? ` class="sl" style="--fill:${opt.fill}%"` : ""}${opt.off ? " disabled" : ""}>`;
  if (opt.menu) field = `<div class="drop"><select id="${key}"><option>${value}</option></select>${icon("chev", "c")}</div>`;
  if (opt.color) field = `<button id="${key}" class="swatch" style="background:${value}"></button>`;
  return `<div class="prow${opt.off ? " off" : ""}"><label for="${key}">${label}</label>${field}${opt.menu ? "<span></span>" : icon("spreads")}<i class="dot"></i></div>`;
}
document.querySelector(".rows.a").innerHTML = upper.map((r, n) => row(r, "a" + n)).join("");
document.querySelector(".rows.b").innerHTML = ground.map((r, n) => row(r, "b" + n)).join("");
```
FILE: styles.css
```css
* { box-sizing: border-box; margin: 0; padding: 0; }
body { background: #181818; color: #e2e2e2; font: 12px/16px Inter, "Noto Sans CJK SC", sans-serif; overflow: hidden; }
button, input, select { font: inherit; color: inherit; background: none; border: 0; outline: 0; min-width: 0; }
button { display: inline-flex; align-items: center; justify-content: center; white-space: nowrap; }
select { appearance: none; flex: 1; }
input[type="search"] { appearance: none; }
ul { list-style: none; }
h1, h2, h3 { font-size: inherit; font-weight: 400; }
.defs { position: absolute; width: 0; height: 0; }
.ln { fill: none; stroke: currentColor; stroke-width: 1; }
.w15 { stroke-width: 1.5; }
.w2 { stroke-width: 2; }
.w3 { stroke-width: 3; }
.dash { stroke-dasharray: 2 2; }
.i { width: 16px; height: 16px; flex: none; }
.i.sm { width: 12px; height: 12px; }
.i.big { width: 20px; height: 20px; }
.c { width: 10px; height: 10px; flex: none; }
.grow { flex: 1; }
.g2 { flex: 2; }
.g3 { flex: 3; }
.g4 { flex: 4; }
.g5 { flex: 5; }
.g9 { flex: 9; }
.dim { color: #888; }
.faint { opacity: .3; }

.app { position: relative; display: flex; flex-direction: column; height: 100vh; }
.titlebar { display: flex; align-items: center; height: 24px; flex: none; padding: 0 6px 0 2px; gap: 6px; }
.titlebar h1 { font: 12px/16px Roboto, "Noto Sans CJK SC", sans-serif; color: #eee; }
.titlebar .orange { color: #e58a3a; }
.win { width: 39px; height: 20px; }
.win svg { width: 12px; height: 12px; }
.menubar { display: flex; align-items: center; height: 29px; flex: none; padding: 0 8px 5px 9px; }
.menus { display: flex; gap: 1px; }
.menus button { padding: 0 8px; height: 20px; }
.tabs { display: flex; gap: 4px; margin-left: 19px; align-self: flex-end; margin-bottom: -3px; color: #9a9a9a; }
.tabs button { padding: 0 9px; height: 22px; min-width: 38px; border-radius: 4px 4px 0 0; }
.tabs .on { background: #303030; color: #fff; }
.plus { width: 22px; height: 22px; font-size: 18px; color: #999; padding-top: 4px; }
.lang { background: #545454; border-radius: 4px; width: 48px; height: 22px; margin-left: 8px; }
.idbar { display: flex; align-items: center; height: 22px; background: #1c1c1c; border: 1px solid #3a3a3a; border-radius: 4px; overflow: hidden; }
.idbar .ed { width: 34px; background: #262626; height: 20px; border: 0; }
.idbar input { flex: 1; padding-left: 8px; height: 20px; }
.idbar.scene { width: 188px; margin-right: 6px; }
.idbar.vlayer { width: 167px; }
.idbar.ngroup { width: 210px; }
.ngroup input { padding-left: 7px; }
.idbar > .dim { margin-right: 5px; }
.sq { width: 21px; height: 20px; flex: none; background: #2c2c2c; }
.sq.on { background: #545454; color: #bbb; }
.sq.blue { background: #4772b3; color: #fff; }
.sq.ghost { color: #444; background: #353535; margin-right: 1px; }
.sq.ghost2 { background: #383838; color: #666; }

.work { display: flex; gap: 4px; flex: 1; min-height: 0; padding-right: 2px; }
.leftcol { flex: 1; min-width: 0; display: grid; grid-template-rows: 448fr 521fr 26px; gap: 4px; }
.rightcol { width: 443px; display: grid; grid-template-rows: 448fr 551fr; gap: 4px; }
.area { position: relative; display: flex; flex-direction: column; min-width: 0; min-height: 0; overflow: hidden; border: 1px solid #383838; border-radius: 5px; background: #303030; }
.toprow { display: flex; gap: 4px; min-height: 0; }
.midrow { display: flex; gap: 2px; min-height: 0; }
.view3d { flex: 962; }
.sheet { flex: 505; }
.shader { flex: 263; }
.geon { flex: 1206; }
.head { display: flex; align-items: center; height: 27px; flex: none; padding: 0 5px 0 7px; gap: 6px; }
.head > .menus { margin-left: -2px; }
.midrow .head, .propsed .head { height: 26px; }
.ed { height: 20px; gap: 1px; padding: 0 3px; background: #282828; border: 1px solid #353535; border-radius: 3px; flex: none; }
.sel { display: flex; align-items: center; height: 20px; background: #282828; border: 1px solid #383838; border-radius: 3px; padding: 0 4px; gap: 6px; flex: none; }
.mode { width: 96px; }
.grp { display: flex; flex: none; border-radius: 3px; overflow: hidden; }
.cb { width: 20px; height: 20px; flex: none; }
.orient { width: 66px; gap: 2px; padding: 0 2px; margin-right: 2px; }
.ov { margin: 0 1px 0 2px; }
.shade { margin-right: 2px; }
.tools { height: 28px; padding: 0 2px 0 16px; gap: 10px; }
.tsel { width: 20px; height: 20px; border: 1px dashed #c5a53b; }
.modes .sq { border-right: 1px solid #3a3a3a; }
.asset { display: flex; align-items: center; gap: 4px; margin-left: 292px; }
.asset .c { width: 14px; height: 14px; }
.hex { width: 16px; height: 18px; background: linear-gradient(100deg, #2fa8a0, #3cb060 50%, #e0553a 55%); clip-path: polygon(50% 0, 100% 25%, 100% 75%, 50% 100%, 0 75%, 0 25%); }
.opt { background: #282828; width: 52px; height: 20px; gap: 6px; border-radius: 3px; }
.scene3d { position: relative; flex: 1; background: #3e3e3e; overflow: hidden; }
.fill { position: absolute; inset: 0; width: 100%; height: 100%; }
.info { position: relative; padding: 9px 10px; color: #fff; text-shadow: 0 0 2px #000; }
.info p { line-height: 20px; }
.axis { position: absolute; right: 6px; top: 9px; width: 96px; height: 96px; }
.axis text { font-size: 11px; font-weight: 600; text-anchor: middle; fill: #111; }
.navs { position: absolute; right: 9px; top: 101px; display: grid; gap: 5px; }
.navs button { width: 28px; height: 28px; border-radius: 50%; background: #2b2b2b; }
.edgeR, .edgeL { position: absolute; top: 19px; color: #aaa; }
.edgeR { right: -1px; }
.edgeL { left: -3px; }

.crumb { display: flex; align-items: center; white-space: nowrap; }
.crumb .i { margin-right: 10px; }
.crumb span { margin-right: 16px; }
.crumb .c { margin-right: 16px; }
.sheet .head { gap: 8px; }
.sheet .sel { width: 94px; }
.sheet .crumb { margin-left: 2px; }
.sheet .crumb .i { margin-right: 9px; }
.sheet .grp { margin-left: 9px; }
.sheet .crumb span:last-child { margin-right: 4px; }
.sheetbody { flex: 1; min-height: 0; display: flex; overflow: hidden; }
.dtree { width: 170px; flex: none; padding: 0 6px 0 7px; }
.geosel { display: flex; align-items: flex-end; height: 12px; background: #4772b3; border-radius: 0 0 3px 3px; padding: 0 0 2px 23px; gap: 8px; overflow: hidden; color: #d5d5d5; line-height: 14px; }
.dtree h2 { display: flex; align-items: center; gap: 8px; height: 37px; padding-left: 3px; }
.dtree ul { background: #282828; border-right: 3px solid #404040; margin-right: -4px; padding: 1px 2px 4px 0; }
.dtree li { display: flex; align-items: center; height: 24px; padding: 0 5px 0 36px; gap: 11px; position: relative; }
.dtree li.p { padding-left: 5px; }
.dtree li.p.leaf { padding-left: 22px; padding-right: 5px; }
.dtree li.p .c { margin-right: -4px; }
.dtree li:not(.p)::before { content: ""; position: absolute; left: 12px; top: 0; bottom: 0; border-left: 1px solid #444; }
.dtree li.on { background: #4772b3; height: 20px; margin: 2px 0; border-radius: 3px; }
.dtree b { margin-left: auto; font-weight: 400; color: #707070; }
.dtree .on b { color: #a5b8d8; }
.grid { flex: 1; position: relative; overflow: hidden; border-right: 3px solid #2c2c2c; }
table { border-collapse: collapse; width: 100%; }
.grid tr { height: 22px; }
.grid thead tr { height: 19px; }
thead td { background: #303030; }
.grid th { width: 42px; background: #303030; font-weight: 400; text-align: right; padding: 0 5px 0 0; border-right: 1px solid #202020; color: #ccc; }
tbody td { background: #282828; }
tbody tr:nth-child(even) td { background: #2b2b2b; }
thead th, thead td { border-bottom: 1px solid #1f1f1f; }
.stat { height: 27px; flex: none; text-align: right; padding: 6px 8px; }

.shader, .geon { background: #1d1d1d; }
.canvas { position: relative; flex: 1; overflow: hidden; }
.canvas::before, .canvas::after { content: ""; position: absolute; background: #333; border-radius: 2px; }
.canvas::before { bottom: 1px; height: 4px; }
.canvas::after { right: 1px; width: 4px; }
.shader .canvas::before { left: 46%; width: 28%; }
.shader .canvas::after { top: 7%; bottom: 3%; }
.geon .canvas::before { left: 29%; width: 8%; }
.geon .canvas::after { top: 23%; height: 11%; }
.canvas .crumb { position: relative; height: 46px; padding-left: 19px; }
.geon .crumb span { margin-right: 14px; }
.geon .crumb .c { margin-right: 11px; }
.shader .crumb span { margin-right: 5px; }
.shader .crumb .c { margin-right: 11px; }
.wires { position: absolute; left: 0; top: 0; fill: none; stroke-width: 2; }
.shader .wires { width: 263px; height: 490px; }
.geon .wires { width: 1205px; height: 490px; }
.shader .head { padding-right: 0; overflow: hidden; }
.obj { width: 92px; }
.modi { width: 74px; }
.geon .head > .menus { margin-left: -3px; }
.tpin { margin-left: 3px; }

.node { position: absolute; width: 109px; font-size: 9px; line-height: 14px; background: #303030; box-shadow: 0 1px 4px 1px #0008; padding-bottom: 2px; }
.node .time { display: flex; align-items: center; gap: 6px; height: 16px; background: #1b1b1b; border-bottom: 1px solid #222; padding-left: 5px; white-space: nowrap; }
.node .i { width: 12px; height: 12px; }
.node .c { width: 8px; height: 8px; }
.node h3 { display: flex; align-items: center; height: 16px; padding-left: 7px; gap: 4px; background: #21795a; margin-bottom: 2px; white-space: nowrap; }
.node .row { position: relative; display: flex; align-items: center; height: 18px; padding: 0 9px; white-space: nowrap; }
.node.tall .row { height: 19px; }
.node.tall h3 { background: #3b4f25; margin-bottom: 1px; }
.grpi { margin-left: auto; }
.n3 { width: 180px; padding-bottom: 0; }
.n4 { width: 139px; }
.node sub { font-size: 7px; margin: 6px 3px 0 -5px; }
.out { justify-content: flex-end; text-align: right; }
.row.in::before, .row.out::after { content: ""; position: absolute; left: -4px; width: 8px; height: 8px; border-radius: 50%; background: #21dfa0; }
.row.out::after { left: auto; right: -4px; }
.row.bool::before, .row.vec::before, .row.val::before { left: -3px; width: 6px; height: 6px; background: #222; border: 1px solid #c8a8d0; border-radius: 1px; transform: rotate(45deg); }
.row.vec::before { border-color: #7070d8; }
.row.val::before { border-color: #aaa; }
.row.flt::before { background: #909090; }
.row.str::before { background: #5f7a58; }
.drop { display: flex; align-items: center; flex: 1; height: 14px; background: #262626; border: 1px solid #383838; border-radius: 3px; padding: 0 3px 0 4px; }
.num { display: flex; flex: 1; height: 15px; align-items: center; background: #545454; border-radius: 3px; padding: 0 9px; }
.num input { width: 100%; text-align: right; }
.gsel { display: flex; align-items: center; flex: 1; height: 14px; background: #262626; border-radius: 3px; overflow: hidden; }
.gsel input { flex: 1; width: 20px; padding-left: 4px; background: #1b1b1b; height: 14px; }
.gsel button { width: 19px; height: 14px; background: #4a4a4a; color: #bbb; }
.n4 .gsel { margin: 0 -2px; }
.edit { flex: 1; height: 15px; background: #1b1b1b; border: 1px solid #3c3c3c; border-radius: 3px; padding: 0 4px; display: flex; align-items: center; }
.edit input { width: 6px; background: #5a85cc; height: 13px; }
.xyz { display: grid; gap: 1px; margin: -2px 8px 0; border-radius: 3px; overflow: hidden; }
.xyz input { width: 100%; height: 15px; background: #545454; text-align: center; }
.n5 { border: 1px solid #eee; border-radius: 4px; padding-bottom: 0; }
.n5 h3 { background: #3d1a2a; border-radius: 3px 3px 0 0; padding-right: 5px; }

.mini { position: absolute; width: 60px; background: #303030; font-size: 5px; line-height: 8px; box-shadow: 0 1px 4px #0008; padding-bottom: 3px; }
.mini h3 { height: 9px; padding-left: 11px; background: #6e7420; }
.mini p { position: relative; display: flex; align-items: center; height: 10px; padding: 0 6px; white-space: nowrap; }
.mini select, .mini p > input { background: #252525; border: 1px solid #3b3b3b; height: 9px; padding-left: 1px; border-radius: 2px; line-height: 7px; width: 100%; }
.mini label { display: flex; align-items: center; gap: 2px; }
.mini input[type="checkbox"] { appearance: none; width: 5px; height: 5px; background: #444; }
.mini input[type="checkbox"]:checked { background: #4772b3; border: 1px solid #9ab8e8; }
.mini .in::before, .mini .out::after { content: ""; position: absolute; left: -2px; width: 4px; height: 4px; border-radius: 50%; background: #c0c030; }
.mini .out::after { left: auto; right: -2px; }
.mini .in.g::before, .mini .out.g::after { background: #999; }
.mini .out.v::after { background: #6060c0; }
.mini p i { position: absolute; right: 5px; width: 27px; height: 8px; background: #84c80a; }
.mini p .red { background: #ee1500; }
.attr { width: 70px; }
.attr h3 { background: #7b2850; }
.bsdf { width: 60px; height: 150px; }
.bsdf h3 { background: #27602b; }
.mini.bsdf p i { left: 6px; background: #405a88; }
.ramp { width: 100px; height: 88px; border: 1px solid #fff; padding: 0 6px; }
.ramp h3 { background: #246283; margin: 0 -6px; padding-left: 8px; }
.ramp .two { display: flex; gap: 4px; height: 10px; align-items: center; color: #ccc; }
.ramp .two span { flex: 1; text-align: center; }
.ramp .two select { flex: 2; width: 10px; }
.ramp .two input { flex: 1; width: 10px; background: #4a4a4a; text-align: center; height: 8px; }
.ramp p { padding: 0; }
.ramp .bar { height: 8px; margin: 3px 0 5px; background: linear-gradient(90deg, #fff 12%, #1570e8 12% 25%, #f08010 25% 39%, #fff 39% 66%, #1570e8 66%); }
.ramp .plain { background: #1570e8; margin: 2px 0 1px; }

.timeline .head { height: 26px; padding-right: 18px; }
.tm .c { margin-left: 6px; }
.tm button:nth-child(1) { padding-right: 2px; }
.tm button:nth-child(2) { padding-right: 5px; }
.play .sq { width: 22px; border-right: 1px solid #3d3d3d; }
.play { margin-left: 4px; }
.tf { background: #545454; height: 20px; border-radius: 3px; text-align: center; }
.w80 { width: 80px; }
.w86 { width: 86px; }
.range { background: #545454; }
.range label { display: flex; align-items: center; justify-content: center; width: 95px; gap: 8px; border-left: 1px solid #3d3d3d; }
.range input { width: 26px; text-align: right; }
.brk { width: 37px; height: 20px; background: #4a4a4a; border-radius: 3px; }

.outliner { background: #282828; }
.outliner .head, .propsed .head { background: #303030; padding: 0 6px 0 9px; }
.outliner .head { gap: 4px; position: relative; z-index: 1; }
.newc { margin-left: 5px; border-radius: 3px; }
.find { display: flex; align-items: center; gap: 8px; width: 127px; height: 21px; padding: 0 4px; background: #1d1d1d; border: 1px solid #333; border-radius: 3px; flex: none; }
.propsed .find { margin-right: 9px; }
.find input { width: 60px; }
.find input::placeholder { color: #777; }
.olist { position: relative; margin-top: -8px; }
.olist::before { content: ""; position: absolute; left: 30px; top: 0; height: 390px; border-left: 1px solid #6a6a6a; }
.outliner::after, .propsed::after { content: ""; position: absolute; right: 1px; width: 3px; border-radius: 2px; background: #444; }
.outliner::after { top: 36%; bottom: 3%; }
.propsed::after { top: 18%; bottom: 51%; }
.olist li { display: flex; align-items: center; height: 22px; padding: 0 11px 0 49px; gap: 6px; color: #c8c8c8; }
.olist li:nth-child(odd) { background: #2b2b2b; }
.olist li.top { padding-left: 27px; }
.ob { color: #cf8548; width: 20px; height: 20px; display: flex; align-items: center; justify-content: center; margin-right: -1px; border-radius: 4px; }
.ob.act { background: #555; }
.nm { margin-right: 18px; }
.d-wrencho { color: #7080c8; }
.d-mesh, .d-sun, .d-movieo { color: #22c088; }
.d-movieo { background: #4a5a54; border-radius: 3px; box-shadow: 0 0 0 2px #4a5a54; }
.olist .grow ~ .i { color: #e2e2e2; }

.pbody { flex: 1; display: flex; min-height: 0; overflow: hidden; }
.ptabs { width: 29px; flex: none; background: #1c1c1c; display: flex; flex-direction: column; padding-top: 8px; color: #b5b5b5; }
.ptabs button { height: 30px; flex: none; }
.ptabs .gap { margin-bottom: 8px; }
.ptabs .on { background: #303030; }
.ptabs .pinkc { color: #c25068; }
.orangec { color: #cf8548; }
.bluec { color: #6f90e8; }
.bluec2 { color: #6a80c0; }
.greenc { color: #22c088; }
.panel { flex: 1; margin: 0 9px 0 8px; border: solid #55598a; border-width: 0 1px; background: #3c3c3c; }
.propsed { border-bottom: 0; border-radius: 5px 5px 0 0; }
.rows { padding-top: 3px; }
.rows.b { background: #353535; padding: 4px 0; }
.panel h2 { display: flex; align-items: center; gap: 8px; height: 27px; padding-left: 12px; }
.prow { display: grid; grid-template-columns: 146fr 187px 20px 12px 18px; align-items: center; height: 27px; }
.prow > label:first-child { text-align: right; padding-right: 10px; }
.prow > input, .prow .swatch { height: 20px; background: #545454; border-radius: 3px; text-align: center; width: 100%; }
.prow > input.sl { background: linear-gradient(90deg, #4772b3 var(--fill), #545454 var(--fill)); }
.prow .drop { height: 20px; padding: 0 2px 0 6px; }
.prow > .i { width: 19px; height: 17px; justify-self: end; }
.prow .dot { width: 5px; height: 5px; border-radius: 50%; background: #e2e2e2; grid-column: 5; }
.prow.off { color: #777; }
.prow.off > input { background: #404040; }
.prow.off .dot, .prow.off .i { opacity: .2; }
.chk { display: flex; align-items: center; gap: 4px; }
.chk input { appearance: none; width: 14px; height: 14px; border-radius: 3px; background: #4772b3; position: relative; }
.chk input::after { content: ""; position: absolute; left: 5px; top: 2px; width: 4px; height: 7px; border: solid #fff; border-width: 0 2px 2px 0; transform: rotate(40deg); }

.status { height: 25px; flex: none; text-align: right; padding: 5px 13px; color: #999; }

.keys { position: absolute; left: 35px; top: 766px; color: #fff; font-size: 19px; line-height: 24px; pointer-events: none; }
.keys .op { font-size: 20px; }
.keys svg { display: block; width: 34px; height: 46px; margin: 8px 0; }
.keys hr { width: 103px; border: 0; border-top: 2px solid #fff; margin-bottom: 9px; }
.mark { position: absolute; left: 11px; top: 1030px; display: flex; gap: 10px; align-items: center; opacity: .5; pointer-events: none; }
.mark svg { width: 38px; height: 38px; }
.mark span { font: 700 36px/38px "Open Sans", sans-serif; color: #888; }
```
